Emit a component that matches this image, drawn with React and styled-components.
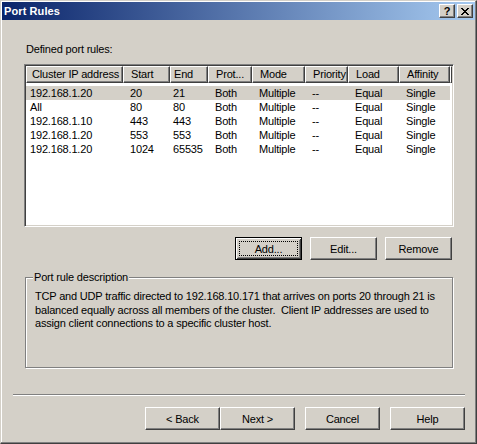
import React from 'react';
import styled, { createGlobalStyle, css } from 'styled-components';

const FACE = '#D4D0C8';
const SHADOW = '#808080';
const DARK = '#404040';
const LIGHT = '#FFFFFF';

const GlobalStyle = createGlobalStyle`
  html, body {
    margin: 0;
    padding: 0;
    background: ${FACE};
  }
  body {
    font-family: "Liberation Sans", Arial, sans-serif;
    font-size: 11px;
    letter-spacing: -0.18px;
    color: #000;
  }
`;

// classic 3d bevel used by buttons and header items
const raised = css`
  border: 1px solid;
  border-color: ${LIGHT} ${DARK} ${DARK} ${LIGHT};
  box-shadow: inset -1px -1px 0 ${SHADOW}, inset 1px 1px 0 ${FACE};
`;

const Window = styled.div`
  box-sizing: border-box;
  width: 477px;
  height: 444px;
  padding: 1px;
  background: ${FACE};
  border: 1px solid;
  border-color: ${FACE} ${DARK} ${DARK} ${FACE};
  box-shadow: inset -1px -1px 0 ${SHADOW}, inset 1px 1px 0 ${LIGHT};
  display: flex;
  flex-direction: column;
`;

const TitleBar = styled.div`
  height: 18px;
  display: flex;
  align-items: center;
  padding: 0 2px 0 2px;
  background: linear-gradient(to right, #0a246a, #a6caf0);
`;

const Title = styled.span`
  flex: 1;
  color: #fff;
  font-weight: bold;
  font-size: 11px;
  letter-spacing: 0.1px;
`;

const CaptionButton = styled.button`
  ${raised};
  box-sizing: border-box;
  width: 16px;
  height: 14px;
  padding: 0;
  margin-left: ${p => (p.$gap ? 2 : 0)}px;
  background: ${FACE};
  display: flex;
  align-items: center;
  justify-content: center;
  font-family: "Liberation Sans", Arial, sans-serif;
  font-weight: bold;
  font-size: 11px;
  line-height: 12px;
  color: #000;
`;

const Body = styled.div`
  padding: 23px 0 0 22px;
  display: flex;
  flex-direction: column;
`;

const Caption = styled.div`
  height: 13px;
  line-height: 13px;
  padding-left: 2px;
  margin-bottom: 8px;
`;

const ListView = styled.div`
  box-sizing: border-box;
  width: 430px;
  height: 163px;
  background: #fff;
  border: 1px solid;
  border-color: ${SHADOW} ${LIGHT} ${LIGHT} ${SHADOW};
  box-shadow: inset 1px 1px 0 ${DARK}, inset -1px -1px 0 ${FACE};
  padding: 1px;
  overflow: hidden;
`;

const HeaderRow = styled.div`
  display: flex;
  height: 17px;
  margin-bottom: 3px;
`;

const HeaderCell = styled.div`
  ${raised};
  box-sizing: border-box;
  flex: ${p => (p.$fill ? 1 : 'none')};
  width: ${p => p.$w}px;
  padding-left: ${p => p.$pad}px;
  background: ${FACE};
  line-height: 15px;
  white-space: nowrap;
  overflow: hidden;
`;

const Row = styled.div`
  display: flex;
  width: 424px;
  height: 14px;
  line-height: 14px;
  background: ${p => (p.$selected ? FACE : 'transparent')};
`;

const Cell = styled.div`
  box-sizing: border-box;
  width: ${p => p.$w}px;
  padding-left: ${p => p.$pad}px;
  white-space: nowrap;
  overflow: hidden;
`;

const ButtonRow = styled.div`
  display: flex;
  justify-content: flex-end;
  gap: 8px;
  width: 428px;
  margin-top: 10px;
`;

const PushButton = styled.button`
  box-sizing: border-box;
  width: ${p => p.$w || 75}px;
  height: 23px;
  padding: 0;
  margin: 0;
  background: ${FACE};
  font-family: "Liberation Sans", Arial, sans-serif;
  font-size: 11px;
  letter-spacing: -0.18px;
  color: #000;
  ${p =>
    p.$focused
      ? css`
          border: 1px solid #000;
          box-shadow: inset 1px 1px 0 ${LIGHT}, inset -1px -1px 0 ${DARK},
            inset 2px 2px 0 ${FACE}, inset -2px -2px 0 ${SHADOW};
        `
      : raised};
  display: flex;
  align-items: center;
  justify-content: center;
`;

const FocusRing = styled.span`
  box-sizing: border-box;
  width: calc(100% - 6px);
  height: calc(100% - 6px);
  border: 1px dotted #000;
  display: flex;
  align-items: center;
  justify-content: center;
`;

const GroupBox = styled.div`
  position: relative;
  box-sizing: border-box;
  width: 428px;
  height: 91px;
  margin: 17px 0 0 1px;
  border: 1px solid ${SHADOW};
  box-shadow: inset 1px 1px 0 ${LIGHT}, 1px 1px 0 ${LIGHT};
  padding: 12px 0 0 9px;
`;

const GroupLabel = styled.span`
  position: absolute;
  left: 7px;
  top: -7px;
  padding: 0 1px;
  background: ${FACE};
  line-height: 13px;
`;

const Description = styled.p`
  margin: 0;
  line-height: 13.5px;
  white-space: pre;
`;

const Separator = styled.div`
  margin: 26px 10px 0 11px;
  border-top: 1px solid ${SHADOW};
  border-bottom: 1px solid ${LIGHT};
  height: 0;
`;

const Footer = styled.div`
  display: flex;
  justify-content: flex-end;
  padding: 11px 10px 0 0;
`;

const Spacer = styled.div`
  width: 10px;
`;

const columns = [
  { key: 'ip', label: 'Cluster IP address', width: 97, pad: 5, rowPad: 4 },
  { key: 'start', label: 'Start', width: 47, pad: 7 },
  { key: 'end', label: 'End', width: 38, pad: 3 },
  { key: 'protocol', label: 'Prot...', width: 44, pad: 7 },
  { key: 'mode', label: 'Mode', width: 53, pad: 7 },
  { key: 'priority', label: 'Priority', width: 43, pad: 7 },
  { key: 'load', label: 'Load', width: 51, pad: 7 },
  { key: 'affinity', label: 'Affinity', width: 51, pad: 7 },
];

const rules = [
  { ip: '192.168.1.20', start: '20', end: '21', protocol: 'Both', mode: 'Multiple', priority: '--', load: 'Equal', affinity: 'Single' },
  { ip: 'All', start: '80', end: '80', protocol: 'Both', mode: 'Multiple', priority: '--', load: 'Equal', affinity: 'Single' },
  { ip: '192.168.1.10', start: '443', end: '443', protocol: 'Both', mode: 'Multiple', priority: '--', load: 'Equal', affinity: 'Single' },
  { ip: '192.168.1.20', start: '553', end: '553', protocol: 'Both', mode: 'Multiple', priority: '--', load: 'Equal', affinity: 'Single' },
  { ip: '192.168.1.20', start: '1024', end: '65535', protocol: 'Both', mode: 'Multiple', priority: '--', load: 'Equal', affinity: 'Single' },
];

const CloseGlyph = () => (
  <svg width="8" height="7" viewBox="0 0 8 7" shapeRendering="crispEdges">
    <path
      fill="#000"
      d="M0 0h2v1H0zM6 0h2v1H6zM1 1h2v1H1zM5 1h2v1H5zM2 2h4v1H2zM3 3h2v1H3zM2 4h4v1H2zM1 5h2v1H1zM5 5h2v1H5zM0 6h2v1H0zM6 6h2v1H6z"
    />
  </svg>
);

export default function App() {
  return (
    <>
      <GlobalStyle />
      <Window>
        <TitleBar>
          <Title>Port Rules</Title>
          <CaptionButton>?</CaptionButton>
          <CaptionButton $gap>
            <CloseGlyph />
          </CaptionButton>
        </TitleBar>

        <Body>
          <Caption>Defined port rules:</Caption>
          <ListView>
            <HeaderRow>
              {columns.map(col => (
                <HeaderCell key={col.key} $w={col.width} $pad={col.pad}>
                  {col.label}
                </HeaderCell>
              ))}
              <HeaderCell $fill $pad={0} />
            </HeaderRow>
            {rules.map((rule, i) => (
              <Row key={i} $selected={i === 0}>
                {columns.map(col => (
                  <Cell key={col.key} $w={col.width} $pad={col.rowPad ?? col.pad}>
                    {rule[col.key]}
                  </Cell>
                ))}
              </Row>
            ))}
          </ListView>

          <ButtonRow>
            <PushButton $w={67} $focused>
              <FocusRing>Add...</FocusRing>
            </PushButton>
            <PushButton $w={67}>Edit...</PushButton>
            <PushButton $w={67}>Remove</PushButton>
          </ButtonRow>

          <GroupBox>
            <GroupLabel>Port rule description</GroupLabel>
            <Description>
              {'TCP and UDP traffic directed to 192.168.10.171 that arrives on ports 20 through 21 is\n'}
              {'balanced equally across all members of the cluster.  Client IP addresses are used to\n'}
              {'assign client connections to a specific cluster host.'}
            </Description>
          </GroupBox>
        </Body>

        <Separator />

        <Footer>
          <PushButton>&lt; Back</PushButton>
          <PushButton>Next &gt;</PushButton>
          <Spacer />
          <PushButton>Cancel</PushButton>
          <Spacer />
          <PushButton>Help</PushButton>
        </Footer>
      </Window>
    </>
  );
}
